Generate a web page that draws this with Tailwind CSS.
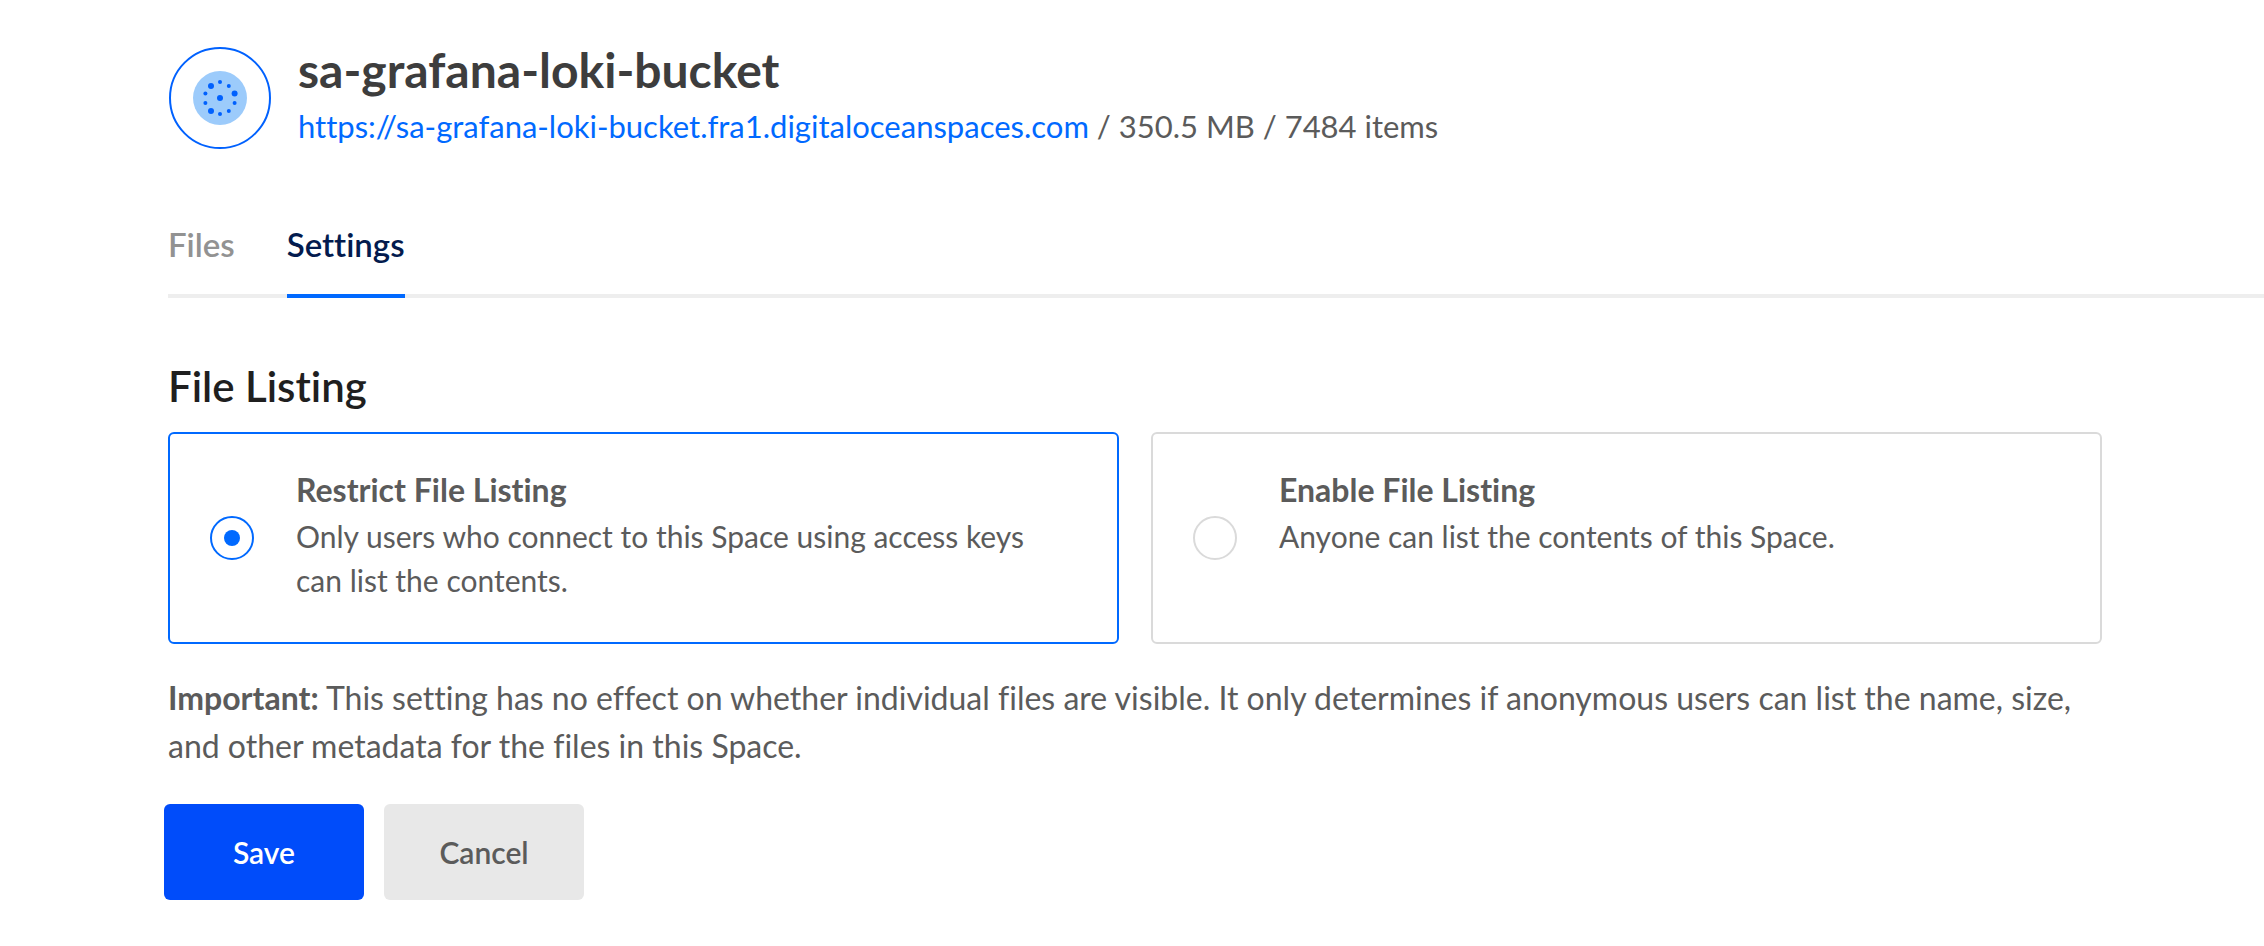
<!DOCTYPE html>
<html lang="en">
<head>
<meta charset="utf-8">
<meta name="viewport" content="width=device-width, initial-scale=1">
<title>sa-grafana-loki-bucket – Settings</title>
<script src="https://cdn.jsdelivr.net/npm/@tailwindcss/browser@4"></script>
</head>
<body class="bg-white pl-[168px] font-['Lato','Open_Sans',sans-serif] text-[32px] leading-[48px] text-[#5b5b5b] [font-variant-ligatures:none]">
  <header class="flex items-center gap-[26px] pt-[42px] pr-[162px]">
    <svg class="size-[104px] shrink-0" viewBox="0 0 104 104" aria-hidden="true">
      <circle cx="52" cy="52" r="50" fill="none" stroke="#0061fe" stroke-width="2"/>
      <circle cx="52" cy="52" r="27" fill="#9ccbfb"/>
      <g fill="#0061fe">
        <circle cx="52" cy="52" r="3"/>
        <circle cx="52" cy="36" r="2"/>
        <circle cx="60.8" cy="40" r="2"/>
        <circle cx="66.6" cy="47.5" r="3"/>
        <circle cx="66.6" cy="57" r="2"/>
        <circle cx="60.8" cy="65" r="2"/>
        <circle cx="52" cy="68" r="2"/>
        <circle cx="43" cy="65" r="3"/>
        <circle cx="37.4" cy="57" r="2"/>
        <circle cx="37.4" cy="47.5" r="2"/>
        <circle cx="43" cy="40" r="3"/>
      </g>
    </svg>
    <div>
      <h1 class="text-5xl leading-[56px] font-bold text-[#3d3d3d]">sa-grafana-loki-bucket</h1>
      <p class="text-[31px] leading-[56px]"><a href="#" class="text-[#0069ff]">https://sa-grafana-loki-bucket.fra1.digitaloceanspaces.com</a> / 350.5 MB / 7484 items</p>
    </div>
  </header>

  <nav class="mt-[66px] flex gap-[52px] border-b-4 border-[#eeeeee] text-[33px] font-semibold">
    <a href="#" class="-mb-1 border-b-4 border-transparent pb-[26px] text-[#929292]">Files</a>
    <a href="#" aria-current="page" class="-mb-1 border-b-4 border-[#0069ff] pb-[26px] text-[#031b4e]">Settings</a>
  </nav>

  <main class="mt-[60px] pr-[162px] pb-10">
    <form>
      <fieldset>
        <legend class="mb-[18px] text-[42px] leading-[56px] font-semibold text-[#1f1f1f]">File Listing</legend>
        <div class="grid grid-cols-2 gap-8">
          <label class="flex items-center gap-[42px] rounded-md border-2 border-[#0069ff] px-10 py-8">
            <input type="radio" name="listing" checked class="grid size-11 shrink-0 appearance-none place-items-center rounded-full border-2 border-[#dadada] before:size-4 before:rounded-full checked:border-[#0069ff] checked:before:bg-[#0069ff]">
            <span class="self-start pb-2">
              <strong class="block font-bold">Restrict File Listing</strong>
              <span class="block text-[30px] leading-[44px]">Only users who connect to this Space using access keys can list the contents.</span>
            </span>
          </label>
          <label class="flex items-center gap-[42px] rounded-md border-2 border-[#dadada] px-10 py-8">
            <input type="radio" name="listing" class="grid size-11 shrink-0 appearance-none place-items-center rounded-full border-2 border-[#dadada] before:size-4 before:rounded-full checked:border-[#0069ff] checked:before:bg-[#0069ff]">
            <span class="self-start pb-2">
              <strong class="block font-bold">Enable File Listing</strong>
              <span class="block text-[30px] leading-[44px]">Anyone can list the contents of this Space.</span>
            </span>
          </label>
        </div>
      </fieldset>
      <p class="mt-[30px]"><strong class="font-bold">Important:</strong> This setting has no effect on whether individual files are visible. It only determines if anonymous users can list the name, size, and other metadata for the files in this Space.</p>
      <div class="mt-[34px] -ml-1 flex gap-5 text-[30px] font-semibold">
        <button type="submit" class="h-24 w-[200px] rounded-md bg-[#004cfa] text-white">Save</button>
        <button type="button" class="h-24 w-[200px] rounded-md bg-[#e8e8e8] text-[#5b5b5b]">Cancel</button>
      </div>
    </form>
  </main>
</body>
</html>
